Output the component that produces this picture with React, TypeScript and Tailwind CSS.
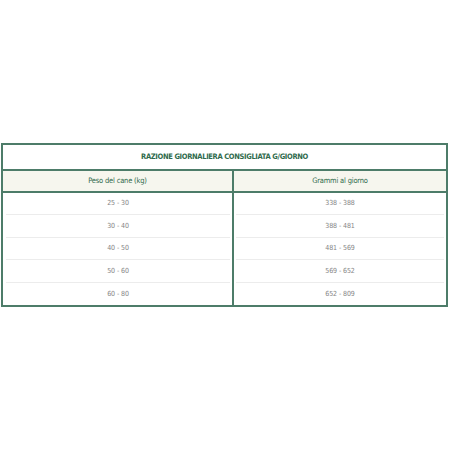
const rows = [
  ["25 - 30", "338 - 388"],
  ["30 - 40", "388 - 481"],
  ["40 - 50", "481 - 569"],
  ["50 - 60", "569 - 652"],
  ["60 - 80", "652 - 809"],
];

export default function App() {
  return (
    <div className="flex h-[450px] w-[450px] items-center bg-white px-[1px] font-['DejaVu_Sans_Condensed','Liberation_Sans',sans-serif]">
      <table className="w-[447px] table-fixed border-collapse border-2 border-[#4d7c69]">
        <colgroup>
          <col className="w-[231px]" />
          <col />
        </colgroup>
        <thead>
          <tr>
            <th colSpan={2} className="h-[26px] border-b-2 border-[#4d7c69] bg-white p-0 text-center text-[7.5px] font-bold uppercase tracking-[-0.35px] text-[#2f6a4c]">
              Razione giornaliera consigliata g/giorno
            </th>
          </tr>
          <tr>
            <th className="h-[22px] border-b-2 border-r-2 border-[#4d7c69] bg-[#f6f6ee] p-0 text-center text-[7.5px] font-normal tracking-[-0.2px] text-[#2f6a4c]">
              Peso del cane (kg)
            </th>
            <th className="h-[22px] border-b-2 border-[#4d7c69] bg-[#f6f6ee] p-0 text-center text-[7.5px] font-normal tracking-[-0.2px] text-[#2f6a4c]">
              Grammi al giorno
            </th>
          </tr>
        </thead>
        <tbody>
          {rows.map((row, i) => (
            <tr key={row[0]}>
              <td className="border-r-2 border-[#4d7c69] p-0 pl-[3px] pr-[2px]">
                <div
                  className={`flex h-[22.6px] items-center justify-center text-[7px] tracking-[-0.1px] text-[#858585] ${
                    i < rows.length - 1 ? "border-b border-[#ececec]" : ""
                  }`}
                >
                  {row[0]}
                </div>
              </td>
              <td className="p-0 pl-[2px] pr-[2px]">
                <div
                  className={`flex h-[22.6px] items-center justify-center text-[7px] tracking-[-0.1px] text-[#858585] ${
                    i < rows.length - 1 ? "border-b border-[#ececec]" : ""
                  }`}
                >
                  {row[1]}
                </div>
              </td>
            </tr>
          ))}
        </tbody>
      </table>
    </div>
  );
}
